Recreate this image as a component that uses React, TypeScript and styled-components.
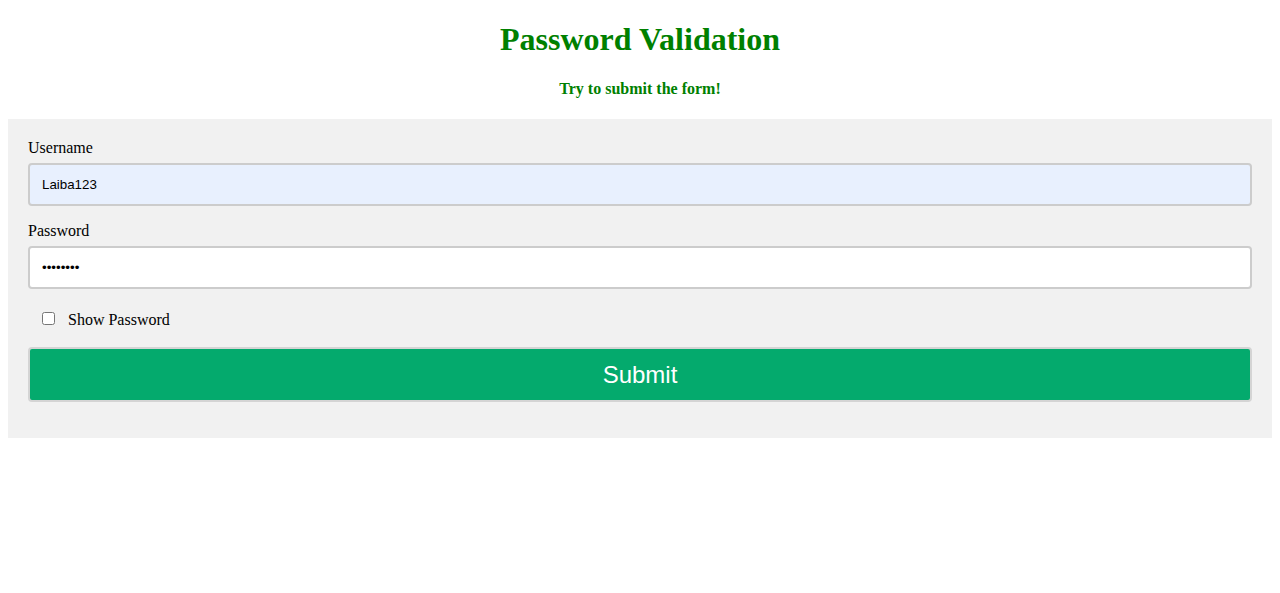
import React, { useState } from "react";
import styled, { createGlobalStyle } from "styled-components";

const GlobalStyle = createGlobalStyle`
  body {
    margin: 8px;
    background: #ffffff;
    font-family: "Liberation Serif", "Times New Roman", serif;
    color: #000;
  }
`;

const Title = styled.h1`
  margin: 13.44px 0 21.44px;
  font-size: 32px;
  font-weight: bold;
  color: #008000;
  text-align: center;
  font-family: "Liberation Serif", "Times New Roman", serif;
`;

const Subtitle = styled.h4`
  margin: 21px 0 21.5px;
  font-size: 16px;
  font-weight: bold;
  color: #008000;
  text-align: center;
  font-family: "Liberation Serif", "Times New Roman", serif;
`;

const Form = styled.form`
  display: flex;
  flex-direction: column;
  background: #f1f1f1;
  padding: 20px;
`;

const Label = styled.label`
  display: block;
  font-size: 16px;
  line-height: 18px;
  margin-bottom: 6px;
`;

const Input = styled.input<{ $autofill?: boolean }>`
  box-sizing: border-box;
  width: 100%;
  height: 43px;
  padding: 0 12px;
  margin: 0 0 16px;
  border: 2px solid #cccccc;
  border-radius: 4px;
  background: ${(p) => (p.$autofill ? "#e8f0fe" : "#ffffff")};
  font-family: "Liberation Sans", Arial, sans-serif;
  font-size: 13.33px;
  color: #000;
  outline: none;
`;

const CheckRow = styled.div`
  display: flex;
  align-items: center;
  height: 26px;
  padding-left: 14px;
  gap: 13px;
  margin-bottom: 16px;
  font-size: 16px;
`;

const Check = styled.input`
  width: 13px;
  height: 13px;
  margin: 0;
`;

const CheckText = styled.span`
  padding-top: 4px;
`;

const SubmitButton = styled.button`
  box-sizing: border-box;
  width: 100%;
  height: 55px;
  margin: 0 0 16px;
  border: 2px solid #d4d4d4;
  border-radius: 4px;
  background: #04aa6d;
  color: #ffffff;
  font-family: "Liberation Sans", Arial, sans-serif;
  font-size: 24px;
  cursor: pointer;
`;

export default function App() {
  const [show, setShow] = useState(false);
  return (
    <>
      <GlobalStyle />
      <Title>Password Validation</Title>
      <Subtitle>Try to submit the form!</Subtitle>
      <Form onSubmit={(e) => e.preventDefault()}>
        <Label htmlFor="usrname">Username</Label>
        <Input id="usrname" type="text" defaultValue="Laiba123" $autofill />
        <Label htmlFor="psw">Password</Label>
        <Input id="psw" type={show ? "text" : "password"} defaultValue="Laiba123" />
        <CheckRow>
          <Check type="checkbox" checked={show} onChange={() => setShow(!show)} />
          <CheckText>Show Password</CheckText>
        </CheckRow>
        <SubmitButton type="submit">Submit</SubmitButton>
      </Form>
    </>
  );
}
